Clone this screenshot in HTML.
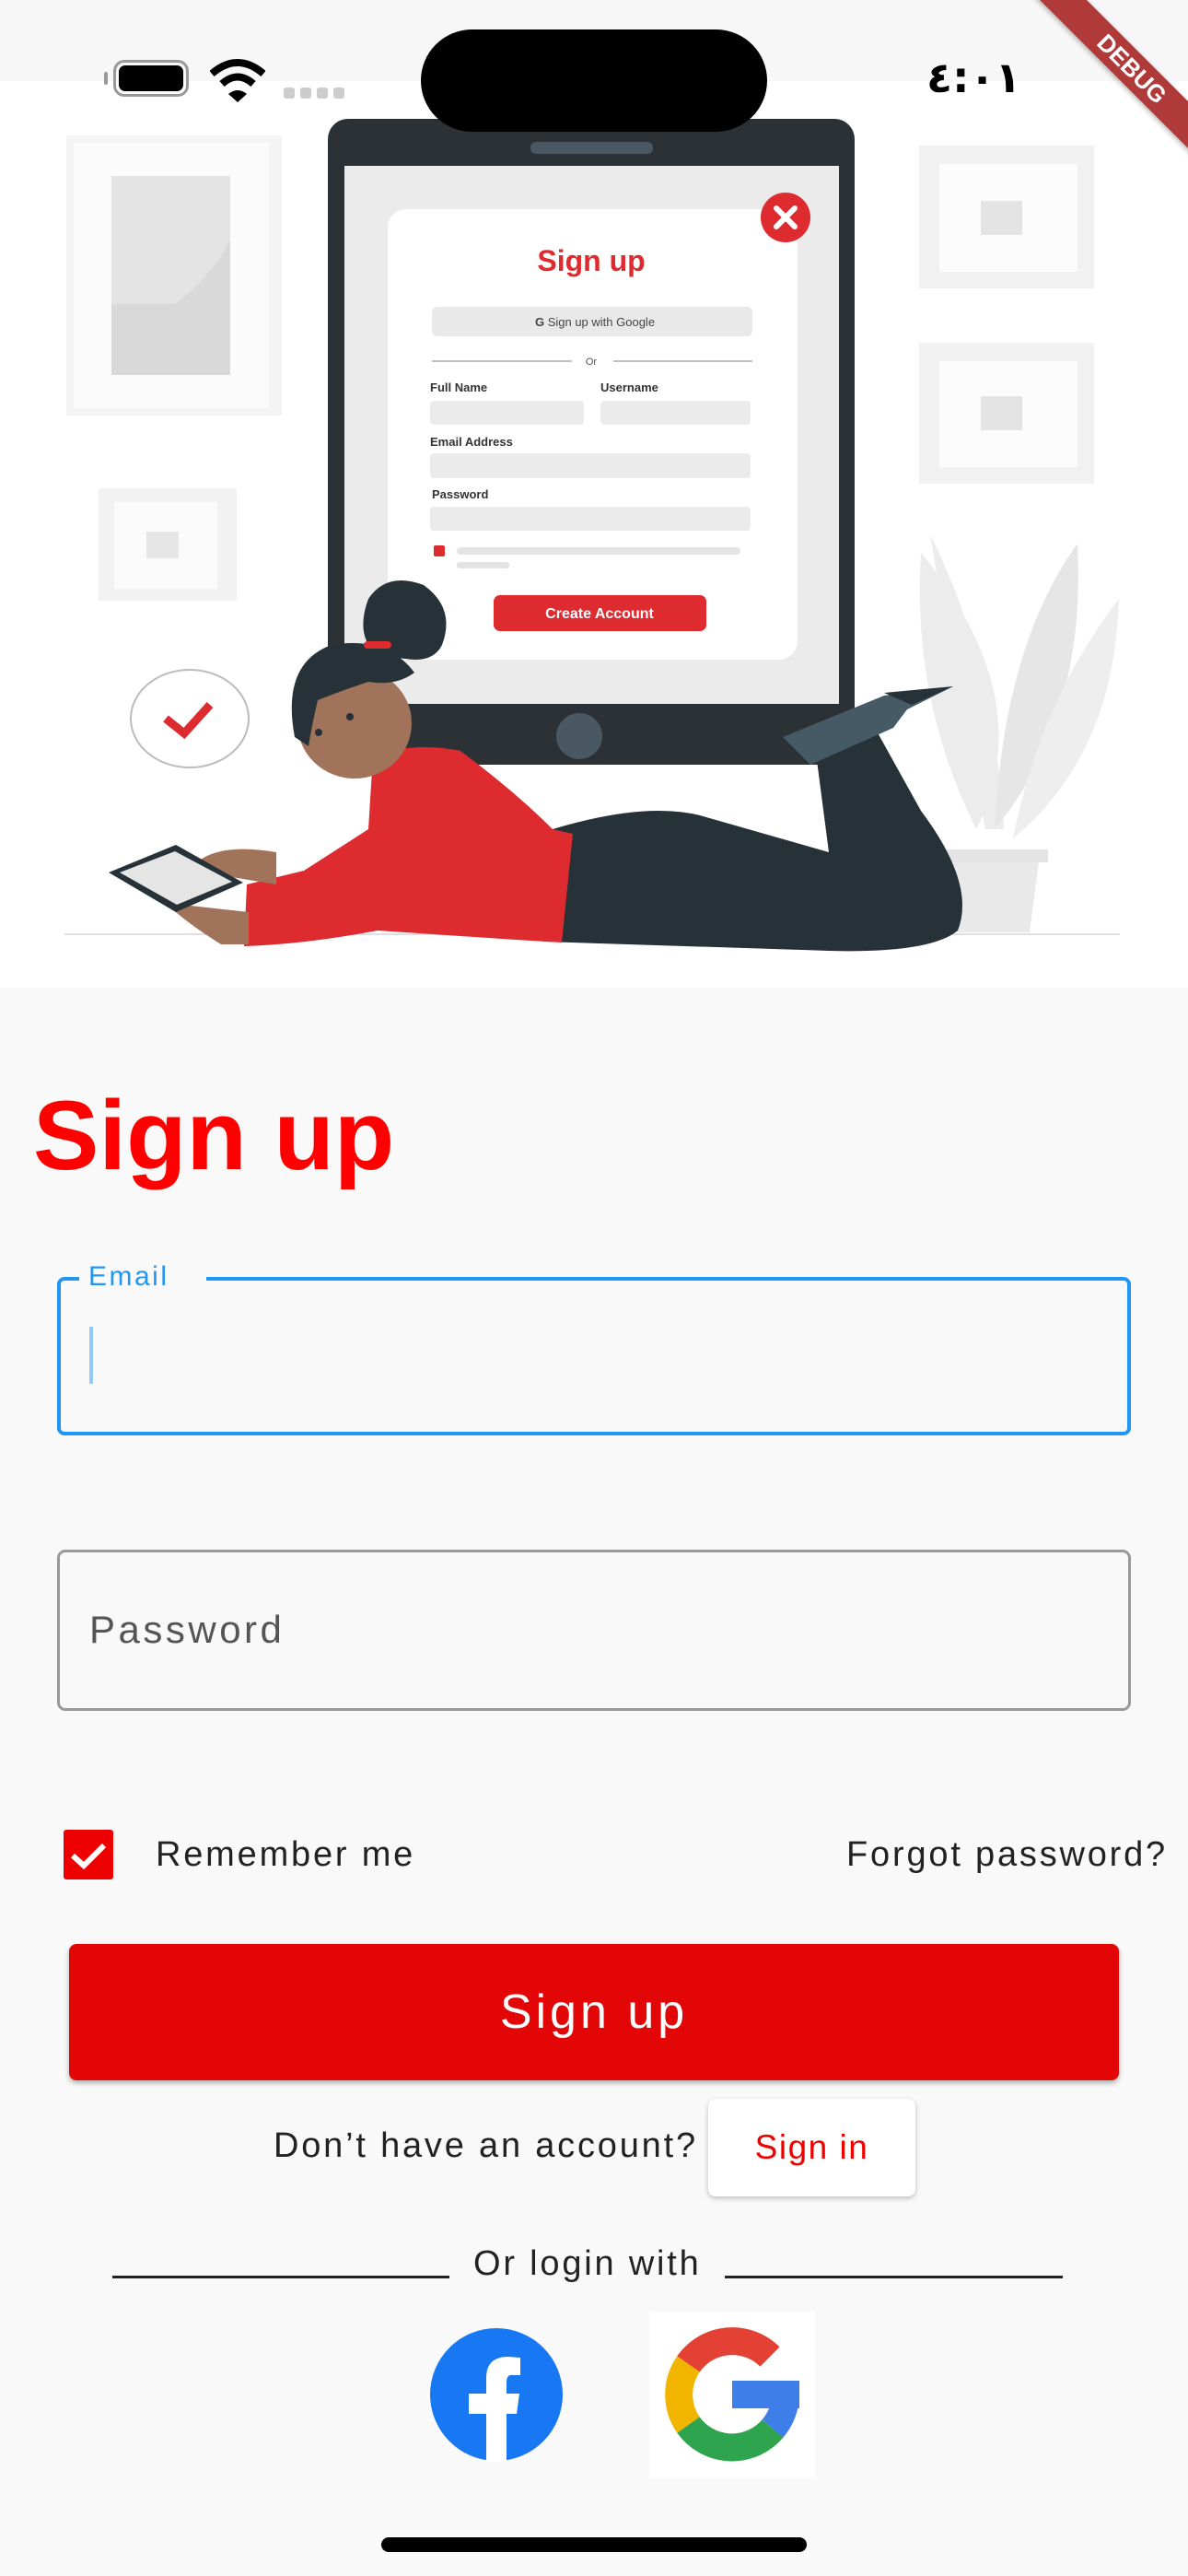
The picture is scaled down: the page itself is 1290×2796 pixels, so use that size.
<!DOCTYPE html>
<html><head><meta charset="utf-8"><style>
*{margin:0;padding:0;box-sizing:border-box}
html,body{width:1290px;height:2796px;overflow:hidden;background:#f9f9f9;font-family:"Liberation Sans",Arial,sans-serif;position:relative}
.abs{position:absolute}
.t{font-size:38px;letter-spacing:2.8px;color:#222;line-height:46px}
</style></head><body>
<svg class="abs" style="left:0;top:0" width="1290" height="1075" viewBox="0 0 1290 1075">
<rect x="0" y="0" width="1290" height="1072" fill="#ffffff"/>
<rect x="0" y="0" width="1290" height="88" fill="#f7f7f7"/>
<rect x="72" y="147" width="234" height="304" fill="#f4f4f4"/>
<rect x="80" y="155" width="212" height="288" fill="#fbfbfb"/>
<rect x="121" y="191" width="129" height="216" fill="#e4e4e4"/>
<path d="M121 330 Q160 330 190 330 Q230 300 250 260 L250 407 L121 407Z" fill="#d9d9d9"/>
<rect x="107" y="530" width="150" height="122" fill="#f2f2f2"/>
<rect x="124" y="545" width="112" height="94" fill="#fbfbfb"/>
<rect x="159" y="577" width="35" height="29" fill="#e6e6e6"/>
<rect x="998" y="158" width="190" height="155" fill="#f1f1f1"/>
<rect x="1020" y="178" width="150" height="117" fill="#fcfcfc"/>
<rect x="1065" y="218" width="45" height="37" fill="#e4e4e4"/>
<rect x="998" y="372" width="190" height="153" fill="#f1f1f1"/>
<rect x="1020" y="392" width="150" height="115" fill="#fcfcfc"/>
<rect x="1065" y="430" width="45" height="37" fill="#e4e4e4"/>
<path d="M1010 580 Q1030 700 1070 900 L1090 900 Q1080 720 1010 580Z" fill="#ececec"/>
<path d="M1000 600 Q990 760 1060 900 Q1130 760 1000 600Z" fill="#ececec"/>
<path d="M1170 590 Q1090 700 1080 900 Q1180 780 1170 590Z" fill="#e6e6e6"/>
<path d="M1215 650 Q1130 760 1100 910 Q1210 820 1215 650Z" fill="#eeeeee"/>
<rect x="1020" y="922" width="118" height="14" fill="#e4e4e4"/>
<path d="M1030 936 L1128 936 L1118 1012 L1040 1012Z" fill="#e9e9e9"/>
<line x1="70" y1="1014" x2="1216" y2="1014" stroke="#e0e0e0" stroke-width="2"/>
<rect x="356" y="129" width="572" height="701" rx="22" fill="#2c3135"/>
<rect x="374" y="180" width="537" height="584" fill="#ebebeb"/>
<rect x="576" y="154" width="133" height="13" rx="6" fill="#4a5863"/>
<circle cx="629" cy="799" r="25" fill="#4a5863"/>
<rect x="421" y="227" width="445" height="489" rx="20" fill="#ffffff"/>
<circle cx="853" cy="236" r="27" fill="#dd2b30"/>
<path d="M843 226 L863 246 M863 226 L843 246" stroke="#fff" stroke-width="6" stroke-linecap="round"/>
<text x="642" y="294" text-anchor="middle" font-family="Liberation Sans" font-weight="bold" font-size="32" fill="#dd2b30">Sign up</text>
<rect x="469" y="333" width="348" height="32" rx="6" fill="#e9e9e9"/>
<text x="646" y="354" text-anchor="middle" font-family="Liberation Sans" font-size="13" fill="#444"><tspan font-weight="bold">G</tspan>  Sign up with Google</text>
<line x1="469" y1="392" x2="621" y2="392" stroke="#aaa" stroke-width="1.5"/>
<line x1="666" y1="392" x2="817" y2="392" stroke="#aaa" stroke-width="1.5"/>
<text x="642" y="396" text-anchor="middle" font-size="11" fill="#555">Or</text>
<text x="467" y="425" font-size="13" font-weight="bold" fill="#333">Full Name</text>
<text x="652" y="425" font-size="13" font-weight="bold" fill="#333">Username</text>
<rect x="467" y="435" width="167" height="26" rx="4" fill="#ebebeb"/>
<rect x="652" y="435" width="163" height="26" rx="4" fill="#ebebeb"/>
<text x="467" y="484" font-size="13" font-weight="bold" fill="#333">Email Address</text>
<rect x="467" y="492" width="348" height="27" rx="4" fill="#ebebeb"/>
<text x="469" y="541" font-size="13" font-weight="bold" fill="#333">Password</text>
<rect x="467" y="550" width="348" height="26" rx="4" fill="#ebebeb"/>
<rect x="471" y="592" width="12" height="12" rx="2" fill="#dd2b30"/>
<rect x="496" y="594" width="308" height="8" rx="4" fill="#e3e3e3"/>
<rect x="496" y="610" width="57" height="7" rx="3" fill="#e3e3e3"/>
<rect x="536" y="646" width="231" height="39" rx="7" fill="#dd2b30"/>
<text x="651" y="671" text-anchor="middle" font-size="16" font-weight="bold" fill="#fff">Create Account</text>
<ellipse cx="206" cy="780" rx="64" ry="53" fill="#fff" stroke="#bbb" stroke-width="2"/>
<path d="M180 780 L200 796 L228 765" stroke="#dd2b30" stroke-width="9" fill="none"/>
<path d="M600 900 Q700 870 760 885 Q830 905 900 925 L885 810 L950 790 L1000 880 Q1060 960 1040 1010 Q1010 1035 900 1032 L590 1022Z" fill="#263238"/>
<path d="M850 800 L960 755 L1035 745 L985 770 L970 790 L880 830Z" fill="#455a64"/>
<path d="M960 752 L1035 745 L990 765Z" fill="#263238"/>
<path d="M405 820 Q450 805 500 815 Q560 860 600 900 L622 905 L610 1023 L560 1020 L410 1010 Q330 1025 265 1027 L268 960 L330 945 L400 900Z" fill="#dd2b30"/>
<path d="M400 650 Q420 620 460 635 Q495 660 480 700 Q470 720 440 715 L410 712 Q385 690 400 650Z" fill="#263238"/>
<ellipse cx="385" cy="785" rx="62" ry="60" fill="#a0735a"/>
<path d="M320 800 Q305 720 360 700 Q420 690 450 730 Q430 745 400 740 Q370 750 345 760 Q338 790 335 810Z" fill="#263238"/>
<rect x="395" y="696" width="30" height="8" rx="4" fill="#dd2b30"/>
<circle cx="380" cy="778" r="4" fill="#263238"/>
<circle cx="346" cy="795" r="4" fill="#263238"/>
<path d="M215 935 Q240 915 300 925 L300 960 L240 950Z" fill="#a0735a"/>
<path d="M180 980 Q200 1000 240 1025 L270 1025 L270 990Z" fill="#a0735a"/>
<path d="M118 947 L191 917 L264 958 L191 990Z" fill="#263238"/>
<path d="M130 947 L190 924 L252 957 L192 982Z" fill="#e5e5e5"/>
</svg>
<div class="abs" style="left:457px;top:32px;width:376px;height:111px;border-radius:56px;background:#000"></div>
<div class="abs" style="left:123px;top:65px;width:82px;height:40px;border:3px solid #999;border-radius:12px;padding:3px"><div style="width:100%;height:100%;background:#000;border-radius:7px"></div></div>
<div class="abs" style="left:113px;top:78px;width:4px;height:14px;background:#999;border-radius:2px"></div>
<svg class="abs" style="left:228px;top:64px" width="60" height="48" viewBox="0 0 60 48"><path d="M2 16 Q30 -8 58 16" stroke="#000" stroke-width="8" fill="none"/><path d="M13 27 Q30 12 47 27" stroke="#000" stroke-width="8" fill="none"/><path d="M20 38 L30 47 L40 38 Q30 30 20 38Z" fill="#000"/></svg>
<div class="abs" style="left:308px;top:95px;width:66px;height:12px;display:flex;gap:6px"><i style="flex:1;background:#ccc;border-radius:3px"></i><i style="flex:1;background:#ccc;border-radius:3px"></i><i style="flex:1;background:#ccc;border-radius:3px"></i><i style="flex:1;background:#ccc;border-radius:3px"></i></div>
<div class="abs" style="left:1006px;top:56px;font-size:46px;font-weight:bold;color:#000;font-family:'DejaVu Sans',sans-serif;line-height:56px">٤:٠١</div>
<div class="abs" style="width:260px;height:36px;background:#b03a3a;transform:rotate(45deg);transform-origin:0 0;box-shadow:0 2px 6px rgba(0,0,0,.3);color:#fff;font-weight:bold;font-size:26px;text-align:center;line-height:36px;left:1150px;top:-30px">DEBUG</div>
<div class="abs" style="left:36px;top:1172px;font-size:107px;font-weight:bold;color:#ff0000;line-height:120px">Sign up</div>
<div class="abs" style="left:62px;top:1386px;width:1166px;height:172px;border:4px solid #2196f3;border-radius:8px"></div>
<div class="abs" style="left:86px;top:1368px;padding:0 10px;background:#f9f9f9;color:#2196f3;font-size:30px;letter-spacing:2.5px;line-height:36px;width:138px">Email</div>
<div class="abs" style="left:97px;top:1440px;width:4px;height:62px;background:#90caf9"></div>
<div class="abs" style="left:62px;top:1682px;width:1166px;height:175px;border:3px solid #999;border-radius:9px"></div>
<div class="abs" style="left:97px;top:1744px;font-size:42px;letter-spacing:3.5px;color:#555;line-height:50px">Password</div>
<div class="abs" style="left:69px;top:1986px;width:54px;height:54px;background:#ee0000;border-radius:3px"></div>
<svg class="abs" style="left:69px;top:1986px" width="54" height="54"><path d="M10 28 L22 39 L44 17" stroke="#fff" stroke-width="6" fill="none"/></svg>
<div class="abs t" style="left:169px;top:1990px">Remember me</div>
<div class="abs t" style="right:22px;top:1990px">Forgot password?</div>
<div class="abs" style="left:75px;top:2110px;width:1140px;height:148px;background:#e30606;border-radius:8px;box-shadow:0 3px 6px rgba(0,0,0,.3);color:#fff;font-size:52px;letter-spacing:4px;text-align:center;line-height:148px">Sign up</div>
<div class="abs t" style="left:297px;top:2306px">Don’t have an account?</div>
<div class="abs" style="left:769px;top:2278px;width:225px;height:106px;background:#fff;border-radius:8px;box-shadow:0 2px 6px rgba(0,0,0,.25);color:#ee0000;font-size:37px;letter-spacing:1.5px;text-align:center;line-height:106px">Sign in</div>
<div class="abs" style="left:122px;top:2470px;width:366px;height:3px;background:#222"></div>
<div class="abs" style="left:787px;top:2470px;width:367px;height:3px;background:#222"></div>
<div class="abs t" style="left:514px;top:2434px">Or login with</div>
<svg class="abs" style="left:466px;top:2526px" width="146" height="146" viewBox="0 0 146 146"><circle cx="73" cy="73" r="72" fill="#1877f2"/><path d="M62 146 L62 94 L43 94 L43 72 L62 72 L62 55 Q62 32 86 32 L99 33 L99 52 L89 52 Q84 52 84 60 L84 72 L98 72 L95 94 L84 94 L84 146Z" fill="#fff"/></svg>
<div class="abs" style="left:705px;top:2509px;width:180px;height:181px;background:#fff"></div>
<svg class="abs" style="left:722px;top:2525px" width="148" height="148" viewBox="0 0 148 148">
<g fill="none" stroke-width="30">
<path d="M114 33 A58 58 0 0 0 25.5 41" stroke="#e34133"/>
<path d="M25.5 41 A58 58 0 0 0 25.5 107" stroke="#f1b500"/>
<path d="M25.5 107 A58 58 0 0 0 117 111" stroke="#2ea44f"/>
<path d="M117 111 A58 58 0 0 0 131 74" stroke="#3e7ee8"/>
</g>
<rect x="73" y="59" width="73" height="30" fill="#3e7ee8"/>
</svg>
<div class="abs" style="left:414px;top:2754px;width:462px;height:16px;background:#000;border-radius:8px"></div>
</body></html>
